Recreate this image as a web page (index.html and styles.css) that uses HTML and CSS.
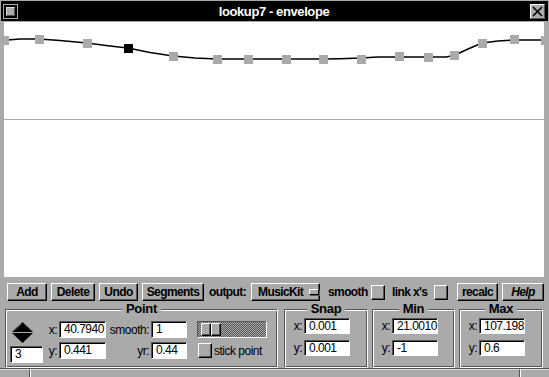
FILE: index.html
```html
<!DOCTYPE html>
<html lang="en">
<head>
	<meta charset="UTF-8">
	<title>lookup7 - envelope</title>
<link rel="stylesheet" href="styles.css">
</head>
<body>
<div class="window">
	<div class="titlebar">
		<span class="mini-btn"><span></span></span>
		<span class="title">lookup7 - envelope</span>
		<svg class="close-btn" width="15" height="15" viewBox="0 0 15 15">
			<rect x="0" y="0" width="15" height="15" fill="#aaa"/>
			<path d="M0.5 14.5V0.5H14.5" fill="none" stroke="#fff"/>
			<path d="M0.5 14.5H14.5V0.5" fill="none" stroke="#555"/>
			<path d="M3 3L12 12M12 3L3 12" stroke="#000" stroke-width="1.6"/>
		</svg>
	</div>

	<div class="canvas">
		<svg class="env" width="540" height="97" viewBox="4 22 540 97">
			<polyline fill="none" stroke="#000" stroke-width="1.5" stroke-linejoin="round"
				points="0,40.5 20,39 39,39 60,40.5 87,43 110,46 128,48 150,52.5 173,56 195,58 217,59 248,59 286,59 323,59 340,58.7 361,58 378,57 399,57 428,57 446,57 454,55.5 468,49 482,43 498,41 514,40 530,40 550,40"/>
			<g fill="#aaa">
				<rect x="0" y="36" width="9" height="9"/>
				<rect x="35" y="35" width="9" height="9"/>
				<rect x="83" y="39" width="9" height="9"/>
				<rect x="169" y="52" width="9" height="9"/>
				<rect x="213" y="55" width="9" height="9"/>
				<rect x="244" y="55" width="9" height="9"/>
				<rect x="282" y="55" width="9" height="9"/>
				<rect x="319" y="55" width="9" height="9"/>
				<rect x="357" y="55" width="9" height="9"/>
				<rect x="395" y="52" width="9" height="9"/>
				<rect x="424" y="53" width="9" height="9"/>
				<rect x="450" y="51" width="9" height="9"/>
				<rect x="478" y="39" width="9" height="9"/>
				<rect x="510" y="35" width="9" height="9"/>
				<rect x="541" y="36" width="9" height="9"/>
			</g>
			<rect x="124" y="44" width="9" height="9" fill="#000"/>
		</svg>
		<div class="lower"></div>
	</div>

	<div class="toolbar">
		<span class="btn w-add">Add</span>
		<span class="btn w-delete">Delete</span>
		<span class="btn w-undo">Undo</span>
		<span class="btn w-segments">Segments</span>
		<span class="tb-label w-output">output:</span>
		<span class="btn w-popup">MusicKit<span class="popup-mark"></span></span>
		<span class="tb-label w-smooth">smooth</span>
		<span class="check"></span>
		<span class="tb-label w-link">link x's</span>
		<span class="check"></span>
		<span class="btn w-recalc">recalc</span>
		<span class="btn w-help">Help</span>
	</div>

	<div class="groups">
		<div class="group point">
			<div class="group-title">Point</div>
			<div class="point-body">
				<div class="stepper">
					<svg class="arrows" width="22" height="22" viewBox="0 0 22 22">
						<polygon points="0,10 10.5,0 21,10" fill="#000"/>
						<polygon points="0,11 21,11 10.5,21" fill="#000"/>
						<path d="M1 9.5L10.5 0.8" stroke="#555" fill="none"/>
					</svg>
					<div class="field index-field">3</div>
				</div>
				<div class="point-grid">
					<span class="lbl">x:</span>
					<div class="field">40.7940</div>
					<span class="lbl">smooth:</span>
					<div class="field">1</div>
					<div class="slider"><span class="knob"></span><span class="knob"></span></div>
					<span class="lbl">y:</span>
					<div class="field">0.441</div>
					<span class="lbl">yr:</span>
					<div class="field">0.44</div>
					<div class="stick"><span class="check"></span>stick point</div>
				</div>
			</div>
		</div>
		<div class="group snap">
			<div class="group-title">Snap</div>
			<div class="coords">
				<div class="coord-row"><span class="lbl">x:</span><div class="field">0.001</div></div>
				<div class="coord-row"><span class="lbl">y:</span><div class="field">0.001</div></div>
			</div>
		</div>
		<div class="group min">
			<div class="group-title">Min</div>
			<div class="coords">
				<div class="coord-row"><span class="lbl">x:</span><div class="field">21.0010</div></div>
				<div class="coord-row"><span class="lbl">y:</span><div class="field">-1</div></div>
			</div>
		</div>
		<div class="group max">
			<div class="group-title">Max</div>
			<div class="coords">
				<div class="coord-row"><span class="lbl">x:</span><div class="field">107.198</div></div>
				<div class="coord-row"><span class="lbl">y:</span><div class="field">0.6</div></div>
			</div>
		</div>
	</div>

	<div class="status">
		<span class="cell cell-left"></span>
		<span class="cell cell-mid"></span>
		<span class="cell cell-right"></span>
	</div>
</div>
</body>
</html>
```

FILE: styles.css
```css
	body{
		margin: 0;
		background: #aaa;
		font-family: "Liberation Sans", Arial, sans-serif;
		font-size: 12px;
		letter-spacing: -0.5px;
		color: #000;
	}
	.window{
		width: 549px;
		height: 377px;
		overflow: hidden;
	}
	.titlebar{
		height: 20px;
		margin: 1px 1px 0;
		padding: 0 3px 0 2px;
		background: #000;
		display: flex;
		align-items: center;
	}
	.mini-btn{
		width: 15px;
		height: 15px;
		box-sizing: border-box;
		border: 1px solid #aaa;
		padding: 2px;
	}
	.mini-btn span{
		display: block;
		width: 9px;
		height: 9px;
		box-sizing: border-box;
		background: #aaa;
		border: 1px solid;
		border-color: #ddd #555 #555 #ddd;
	}
	.title{
		flex: 1;
		text-align: center;
		color: #fff;
		font-weight: bold;
		font-size: 13px;
		letter-spacing: -0.4px;
	}
	.close-btn{
		display: block;
	}
	.canvas{
		margin: 1px 5px 0 4px;
		background: #fff;
	}
	.env{
		display: block;
		border-bottom: 1px solid #aaa;
	}
	.lower{
		height: 157px;
	}
	.toolbar{
		display: flex;
		align-items: center;
		gap: 4px;
		height: 18px;
		margin-top: 6px;
		padding-left: 7px;
	}
	.btn{
		box-sizing: border-box;
		height: 18px;
		display: flex;
		align-items: center;
		justify-content: center;
		background: #aaa;
		border: 1px solid;
		border-color: #fff #000 #000 #fff;
		box-shadow: inset -1px -1px 0 #555;
		font-weight: bold;
		letter-spacing: -0.6px;
	}
	.w-add{ width: 40px; }
	.w-delete{ width: 44px; }
	.w-undo{ width: 39px; }
	.w-segments{ width: 62px; }
	.w-popup{
		width: 69px;
		justify-content: flex-start;
		padding-left: 6px;
	}
	.popup-mark{
		width: 10px;
		height: 6px;
		box-sizing: border-box;
		margin-left: 6px;
		background: #aaa;
		border: 1px solid;
		border-color: #fff #000 #000 #fff;
		box-shadow: 1px 1px 0 #555;
	}
	.w-recalc{
		width: 41px;
		margin-left: 5px;
	}
	.w-help{
		width: 42px;
		font-style: italic;
	}
	.tb-label{
		font-weight: bold;
		letter-spacing: -0.6px;
	}
	.w-output{
		width: 38px;
		margin-left: 1px;
	}
	.w-smooth{
		width: 39px;
		margin-left: 4px;
	}
	.w-link{
		width: 38px;
		margin-left: 3px;
	}
	.check{
		display: block;
		flex-shrink: 0;
		width: 14px;
		height: 15px;
		box-sizing: border-box;
		background: #aaa;
		border: 1px solid;
		border-color: #fff #000 #000 #fff;
		box-shadow: inset -1px -1px 0 #555;
	}
	.groups{
		display: flex;
		gap: 4px;
		margin-top: 8px;
		padding-left: 5px;
	}
	.group{
		box-sizing: border-box;
		height: 59px;
		border: 1px solid;
		border-color: #555 #fff #fff #555;
		box-shadow: inset 1px 1px 0 #fff, inset -1px -1px 0 #555;
	}
	.group-title{
		width: fit-content;
		margin: -8px auto 0;
		padding: 0 4px;
		background: #aaa;
		font-weight: bold;
		font-size: 13px;
		line-height: 14px;
		letter-spacing: -0.3px;
	}
	.point{
		width: 273px;
		margin-right: 2px;
	}
	.snap{ width: 84px; }
	.min{ width: 83px; }
	.max{ width: 84px; }
	.point-body{
		display: flex;
		margin-top: 5px;
		padding-left: 4px;
	}
	.stepper{
		width: 33px;
		flex-shrink: 0;
		display: flex;
		flex-direction: column;
		margin-top: 1px;
	}
	.arrows{
		display: block;
		flex-shrink: 0;
		margin-left: 2px;
	}
	.point-grid{
		display: grid;
		grid-template-columns: 12px 47px 41px 36px 78px;
		grid-template-rows: 17px 17px;
		gap: 4px 2px;
		margin-left: 2px;
	}
	.lbl{
		text-align: right;
		align-self: center;
	}
	.field{
		box-sizing: border-box;
		height: 100%;
		background: #fff;
		border: 1px solid;
		border-color: #555 #fff #fff #555;
		box-shadow: inset 1px 1px 0 #000;
		padding-left: 4px;
		line-height: 15px;
		white-space: nowrap;
	}
	.stepper .index-field{
		height: 17px;
		flex-shrink: 0;
		margin-top: 2px;
	}
	.slider{
		box-sizing: border-box;
		width: 70px;
		height: 17px;
		margin-left: 8px;
		padding: 1px 0 1px 3px;
		display: flex;
		border: 1px solid;
		border-color: #555 #fff #fff #555;
		background: repeating-conic-gradient(#555 0 25%, #aaa 0 50%) 0 0 / 2px 2px;
	}
	.knob{
		width: 10px;
		box-sizing: border-box;
		background: #aaa;
		border: 1px solid;
		border-color: #fff #000 #000 #fff;
		box-shadow: inset -1px -1px 0 #555;
	}
	.stick{
		display: flex;
		align-items: center;
		gap: 2px;
		margin-left: 9px;
		white-space: nowrap;
	}
	.coords{
		display: flex;
		flex-direction: column;
		gap: 6px;
		margin-top: 2px;
		padding-left: 5px;
	}
	.coord-row{
		display: flex;
		align-items: center;
		gap: 2px;
		height: 16px;
	}
	.coord-row .lbl{
		width: 12px;
	}
	.coord-row .field{
		width: 46px;
		height: 16px;
		line-height: 14px;
	}
	.status{
		display: flex;
		height: 8px;
		border-top: 1px solid #555;
	}
	.cell{
		border-top: 1px solid #ddd;
	}
	.cell-left{
		width: 29px;
		border-right: 1px solid #555;
	}
	.cell-mid{
		width: 488px;
		border-left: 1px solid #fff;
		border-right: 1px solid #555;
	}
	.cell-right{
		flex: 1;
		border-left: 1px solid #fff;
	}
```
